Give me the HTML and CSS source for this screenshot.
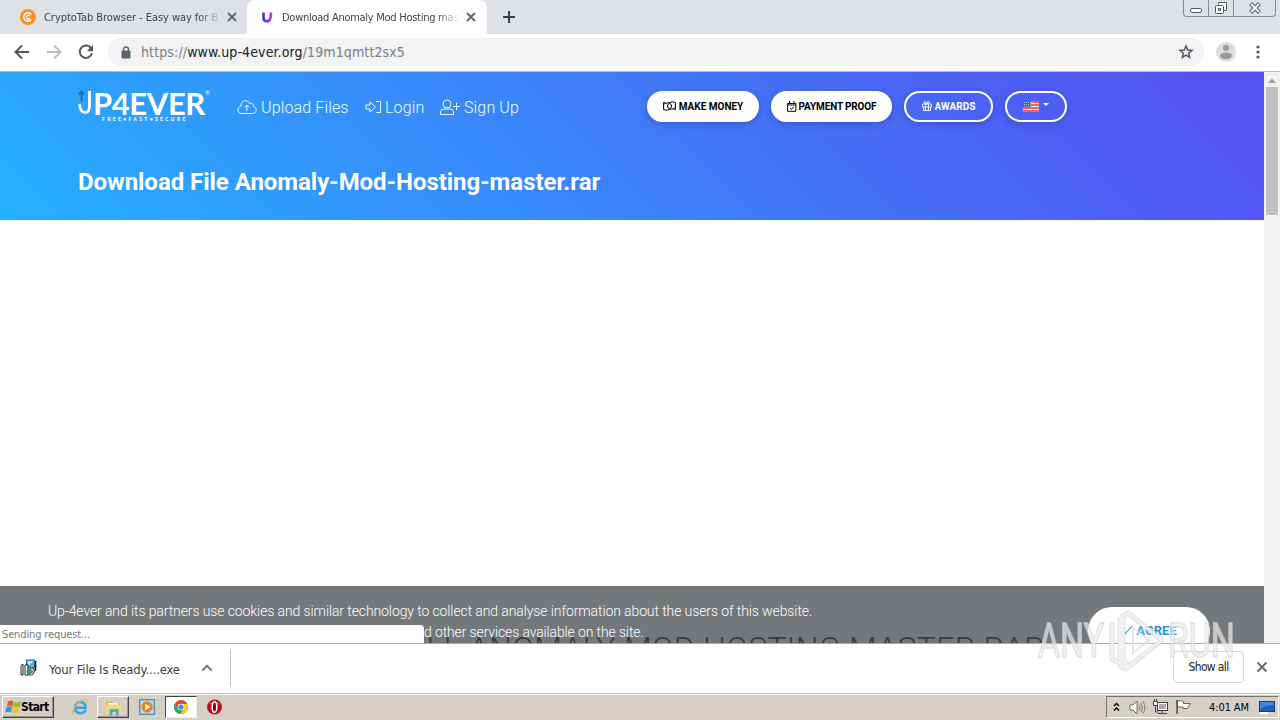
FILE: index.html
```html
<!DOCTYPE html>
<html lang="en">
<head>
<meta charset="utf-8">
<title>Download Anomaly Mod Hosting master rar</title>
<link rel="stylesheet" href="styles.css">
</head>
<body>
<div class="screen">
  <div class="tabstrip">
    <div class="tab">
      <svg class="favicon" width="16" height="16" viewBox="0 0 16 16"><circle cx="8" cy="8" r="8" fill="#f7931e"/><path d="M11.3 5.2A4.3 4.3 0 1 0 11.3 10.8M10 6.8A2 2 0 1 0 10 9.2" fill="none" stroke="#fff" stroke-width="1.4"/></svg>
      <span class="tab-title">CryptoTab Browser - Easy way for B</span>
      <svg class="close" width="10" height="10" viewBox="0 0 10 10"><path d="M1 1l8 8M9 1L1 9" stroke="#5f6368" stroke-width="1.8"/></svg>
    </div>
    <div class="tab active">
      <svg class="favicon" width="16" height="16" viewBox="0 0 16 16"><defs><linearGradient id="u" x2="1"><stop stop-color="#5038c8"/><stop offset="1" stop-color="#b63ae0"/></linearGradient></defs><path d="M4.500 3.500V8.500Q4.500 12.300 7.700 12.300T11.500 8.500L12 3.500" fill="none" stroke="url(#u)" stroke-width="2.700"/></svg>
      <span class="tab-title second">Download Anomaly Mod Hosting mas</span>
      <svg class="close" width="10" height="10" viewBox="0 0 10 10"><path d="M1 1l8 8M9 1L1 9" stroke="#5f6368" stroke-width="1.8"/></svg>
    </div>
    <svg class="newtab" width="12" height="12" viewBox="0 0 12 12"><path d="M6 0v12M0 6h12" stroke="#3c4043" stroke-width="2"/></svg>
    <div class="winbtns">
      <span class="wb1"><svg width="12" height="6"><rect x=".5" y=".5" width="11" height="4" rx="1.5" fill="#fff" stroke="#555b66"/></svg></span>
      <span class="wb2"><svg width="14" height="14"><path d="M4.500 3.500v-2h8v8h-3" fill="#fff" stroke="#555b66"/><rect x="1.500" y="4.500" width="8" height="8" rx="1" fill="#fff" stroke="#555b66"/><rect x="4.500" y="7.500" width="2" height="2" fill="none" stroke="#555b66"/></svg></span>
      <span class="wb3"><svg width="14" height="12" viewBox="0 0 14 12"><path d="M2.500 1.500L11.500 10.500M11.500 1.500L2.500 10.500" stroke="#555b66" stroke-width="4"/><path d="M3 2L11 10M11 2L3 10" stroke="#fff" stroke-width="2"/></svg></span>
    </div>
  </div>

  <div class="toolbar">
    <svg class="nav" width="16" height="16" viewBox="0 0 16 16"><path d="M15 8H2M8 1.500L1.500 8L8 14.500" fill="none" stroke="#54585d" stroke-width="1.900"/></svg>
    <svg class="nav" width="16" height="16" viewBox="0 0 16 16"><path d="M1 8H14M8 1.500L14.500 8L8 14.500" fill="none" stroke="#babcbe" stroke-width="1.900"/></svg>
    <svg class="nav" width="16" height="16" viewBox="0 0 16 16"><path d="M13.300 4.500A6.200 6.200 0 1 0 14 9.300" fill="none" stroke="#54585d" stroke-width="2"/><path d="M15 1v6.200H8.800z" fill="#54585d"/></svg>
    <div class="omnibox">
      <svg class="lock" width="10" height="13" viewBox="0 0 10 13"><path d="M2.500 6V3.500a2.500 2.500 0 0 1 5 0V6" fill="none" stroke="#5f6368" stroke-width="1.400"/><rect x=".5" y="4.500" width="9" height="8" rx="1" fill="#5f6368"/></svg>
      <span class="url"><i>https://</i>www.up-4ever.org<i>/19m1qmtt2sx5</i></span>
      <svg class="star" width="16" height="16" viewBox="0 0 16 16"><path d="M8 2l1.700 4 4.300.4-3.300 2.800 1 4.200L8 11.200l-3.700 2.200 1-4.200L2 6.400l4.300-.4z" fill="none" stroke="#54585d" stroke-width="1.500"/></svg>
    </div>
    <svg class="avatar" width="20" height="20" viewBox="0 0 20 20"><circle cx="10" cy="10" r="10" fill="#dcdcdc"/><circle cx="10" cy="5.800" r="3.100" fill="#9b9b9b"/><ellipse cx="10" cy="13.800" rx="6" ry="3.300" fill="#9b9b9b"/></svg>
    <svg class="dots" width="4" height="14" viewBox="0 0 4 14"><g fill="#54585d"><circle cx="2" cy="2" r="1.600"/><circle cx="2" cy="7" r="1.600"/><circle cx="2" cy="12" r="1.600"/></g></svg>
  </div>

  <div class="viewport">
    <main class="page">
      <header class="hero">
        <nav class="sitenav">
          <div class="logo">
            <div class="logo-word"><svg width="13" height="26" viewBox="0 0 13 26"><path d="M3.500 12V3M1 5.500L3.500 2 6 5.500" fill="none" stroke="#2462b0" stroke-width="1.500"/><path d="M1.500 15Q2 23.500 7 23.500Q11.500 23.500 11.500 17V2" fill="none" stroke="#fff" stroke-width="2.800"/></svg><b>P4EVER</b><sup>®</sup></div>
            <div class="logo-tag">FREE•FAST•SECURE</div>
          </div>
          <div class="links">
            <a class="l1"><svg width="20" height="16" viewBox="0 0 20 16"><path d="M5 14.500H15.500C20 14.500 20.500 8.500 16.500 7.500C17 4.500 14 3.500 12.800 4.800C10.500-.5 3.500 1.500 4 7C-.3 8-.3 14.500 5 14.500M9.800 12V6M7.300 8.500L9.800 6L12.300 8.500" fill="none" stroke="#eaffff"/></svg>Upload Files</a>
            <a class="l2"><svg width="16" height="14" viewBox="0 0 16 14"><path d="M1 5H5V2L10.500 7L5 12V9H1zM11 1.500h4.500v11H11" fill="none" stroke="#eaffff"/></svg>Login</a>
            <a class="l3"><svg width="20" height="17" viewBox="0 0 20 17"><circle cx="7" cy="5" r="4" fill="none" stroke="#eaffff"/><path d="M.5 15.500V13Q.5 10 4 10H10Q13.500 10 13.500 13V15.500zM13 7.500h7M16.500 4v7" fill="none" stroke="#eaffff"/></svg>Sign Up</a>
          </div>
          <div class="buttons">
            <a class="btn b1"><svg width="13" height="10" viewBox="0 0 13 10"><path d="M.6 1.500Q3.500 3 6.500 1.500T12.400 1.500V8.500Q9.500 7 6.500 8.500T.6 8.500z" fill="none" stroke="#000"/><ellipse cx="6.500" cy="5" rx="2" ry="2.500" fill="none" stroke="#000"/><path d="M1 3.500l1.500-1.500M10.500 8l1.500-1.500" stroke="#000"/></svg>MAKE MONEY</a>
            <a class="btn b2"><svg width="10" height="11" viewBox="0 0 10 11"><path d="M.6 2.500h8.300v7.800H.6zM.6 4h8.300M2.500 0v3M7 0v3M3 7l1.300 1.400L7 5.800" fill="none" stroke="#000"/></svg>PAYMENT PROOF</a>
            <a class="btn ghost b3"><svg width="10" height="10" viewBox="0 0 10 10"><path d="M.5 3h9v3h-9zM1.500 6v3.500h7V6M3.500 3v6.500M6.500 3v6.500M5 3Q2 3 2.300 1.200T5 3Q5-.2 7 .7T5 3" fill="none" stroke="#fff" stroke-width=".9"/></svg>AWARDS</a>
            <a class="btn ghost b4"><svg width="16" height="11" viewBox="0 0 16 11"><rect width="16" height="11" fill="#f7e6eb"/><path d="M0 1h16M0 4h16M0 7h16M0 10h16" stroke="#e83b48" stroke-width="1.300"/><rect width="8" height="6.300" fill="#3267b5"/><path d="M1 1.500h7M1 3.500h7M1 5.300h7" stroke="#d7e9ff" stroke-width=".7" stroke-dasharray="1 1"/></svg><em class="caret"></em></a>
          </div>
        </nav>
        <h1>Download File Anomaly-Mod-Hosting-master.rar</h1>
      </header>
      <h2 class="file-title">DOWNLOAD FULL ANOMALY MOD HOSTING MASTER RAR</h2>
      <div class="cookies">
        <p>Up-4ever and its partners use cookies and similar technology to collect and analyse information about the users of this website.<br><span class="line2">d other services available on the site.</span></p>
      </div>
      <a class="agree"><svg width="12" height="10" viewBox="0 0 12 10"><path d="M.7 5.500L4 8.800L11.300 .8" fill="none" stroke="#2d91d3" stroke-width="1.200"/></svg>AGREE</a>
      <div class="status">Sending request...</div>
    </main>
    <div class="scrollbar"><svg width="16" height="15"><path d="M4 11L8 6.500L12 11z" fill="#a0a0a0"/></svg><div class="thumb"></div></div>
  </div>

  <div class="downloads">
    <svg class="installer" width="17" height="18" viewBox="0 0 17 18"><path d="M15.500 2v9l-3 3" fill="none" stroke="#111" stroke-width="1.600"/><rect x="6.500" y="1" width="8" height="8" fill="#5fa8e8" stroke="#286496"/><path d="M7.500 2h6l-5 4.500z" fill="#c9e8ff"/><path d="M1 6.500l2-1.500v11H1zM5 6h3v10H5z" fill="#fff" stroke="#222"/><path d="M8 9h5l1.500 3-2 4H8z" fill="#e8eee9" stroke="#38434c"/><path d="M7 11.500h2.500V9.500L13 12.500 9.500 15.500v-1.700H7z" fill="#42aa65" stroke="#176a36" stroke-width=".7"/></svg>
    <span class="dl-name">Your File Is Ready....exe</span>
    <svg class="chev" width="12" height="8" viewBox="0 0 12 8"><path d="M1.200 6.500L6 1.800L10.800 6.500" fill="none" stroke="#6c7073" stroke-width="1.800"/></svg>
    <i class="divider"></i>
    <a class="showall">Show all</a>
    <svg class="dl-close" width="12" height="12" viewBox="0 0 12 12"><path d="M1.500 1.500l9 9M10.500 1.500l-9 9" stroke="#666a6d" stroke-width="1.900"/></svg>
  </div>

  <div class="taskbar">
    <div class="start"><svg width="17" height="16" viewBox="0 0 17 16"><path d="M3 2.500Q6 .5 8.500 2.500L7.500 7.500Q5 6 1.800 7.500z" fill="#e85c22"/><path d="M9.200 3Q12.500 4.500 16 2.500L14.800 7.500Q12 9 8.200 7.800z" fill="#8cbd38"/><path d="M1.500 8.200Q4.500 6.700 7.300 8.200L6 13.500Q3.500 12 .3 13.500z" fill="#3d8ed8"/><path d="M8 8.500Q11 10 14.500 8.200L13.200 13.500Q10.500 15.500 6.800 13.800z" fill="#f5c02d"/></svg><b>Start</b></div>
    <svg class="ie" width="18" height="18" viewBox="0 0 18 18"><path d="M14.800 12Q12 16 8 15Q3.500 14 4 9Q5 4 9.500 4Q14.800 4.500 14.500 9.700H5" fill="none" stroke="#35a5e5" stroke-width="2.500"/><path d="M2.500 16Q.2 15 3.500 9.500Q10 0 15.500 1.500Q17 2.500 15 6" fill="none" stroke="#e4ba3d" stroke-width="1.200"/></svg>
    <div class="task folder"><svg width="17" height="17" viewBox="0 0 17 17"><path d="M1 2h6l1 2h7v11H1z" fill="#e0bd58"/><path d="M3 4h10v9H3z" fill="#fff7c6"/><path d="M1 6h15v9H1z" fill="#f2d978"/><path d="M4.500 16V10h9v6.500h-3v-3.500H7.500V16.500h-3z" fill="#4aa9dd"/></svg></div>
    <svg class="wmp" width="16" height="16" viewBox="0 0 16 16"><rect x=".5" y=".5" width="15" height="15" fill="#8abce8" stroke="#5889b7"/><rect x="2" y="2" width="12" height="12" fill="#c2def4"/><circle cx="8" cy="8" r="5.700" fill="#ed8518"/><path d="M6.300 4.800v6.400L11.500 8z" fill="#fff"/></svg>
    <div class="task chrome"><svg width="14" height="14" viewBox="0 0 14 14"><circle cx="7" cy="7" r="7" fill="#e44236"/><path d="M.9 3.600A7 7 0 0 0 6.500 14L9.800 8.500L7 7L4.200 8.500z" fill="#3aa657"/><path d="M13.300 4A7 7 0 0 1 6.500 14L9.800 8.500L8.500 4z" fill="#fbc72d"/><circle cx="7" cy="7" r="3.300" fill="#fff"/><circle cx="7" cy="7" r="2.600" fill="#4284ed"/></svg></div>
    <svg class="opera" width="15" height="16" viewBox="0 0 15 16"><circle cx="7.500" cy="8" r="7.500" fill="#b9141b"/><path d="M2 5Q7 0 13 5" fill="#e35c60"/><ellipse cx="7.500" cy="8" rx="2.300" ry="5.300" fill="#741014" stroke="#fff" stroke-width="1.500"/></svg>
    <div class="tray">
      <svg class="t1" width="7" height="10" viewBox="0 0 7 10"><path d="M1 4L3.500 1.500L6 4M1 8.500L3.500 6L6 8.500" fill="none" stroke="#000" stroke-width="1.400"/></svg>
      <svg class="t2" width="17" height="15" viewBox="0 0 17 15"><path d="M1 5h3l4-4v13l-4-4H1z" fill="#fff" stroke="#666"/><path d="M10 4.500q2 3 0 6M12 3q3 4.500 0 9M14 1.500q4 6 0 12" fill="none" stroke="#777"/></svg>
      <svg class="t3" width="17" height="16" viewBox="0 0 17 16"><rect x="5.500" y="3.500" width="10" height="8" fill="#aaa" stroke="#444"/><path d="M6.500 4.500h8v6h-8z" fill="none" stroke="#fff"/><path d="M6 14.500h9M10 12v2M1.500 2.500h4v4h-4zM2.500 0v2M4.500 0v2M3.500 7v6h3" fill="none" stroke="#444"/><path d="M2 3h3v3H2z" fill="#fff"/></svg>
      <svg class="t4" width="17" height="16" viewBox="0 0 17 16"><path d="M2.500 2Q6 1 8.500 2.500V4.500H15.500L12.500 9.500H8V8H2.500z" fill="#fff" stroke="#666"/><path d="M2 1v14" stroke="#555" stroke-width="1.600"/></svg>
      <span class="clock">4:01 AM</span>
      <svg class="t5" width="16" height="13" viewBox="0 0 16 13"><rect x=".5" y=".5" width="15" height="10" fill="#1763bd" stroke="#17416c"/><path d="M1 1h14v3Q7 4 1 8z" fill="#438ad4"/><path d="M1 12h8" stroke="#fff" stroke-width="2"/></svg>
    </div>
  </div>

  <div class="watermark"><span>ANY</span><svg width="62" height="66" viewBox="0 0 62 66"><path d="M7 14V51L12 54M15 9V58L21 61V52M23 5L57 32L22 60L18 54V8z" fill="rgba(255,255,255,.16)" stroke="rgba(205,205,205,.6)" stroke-width="5" stroke-linejoin="round"/><path d="M7 14V51L12 54M15 9V58L21 61V52M23 5L57 32L22 60L18 54V8z" fill="none" stroke="rgba(245,245,245,.8)" stroke-width="3"/><path d="M28 20V45L44 32z" fill="rgba(255,255,255,.2)" stroke="rgba(222,222,222,.8)" stroke-width="2"/></svg><span>RUN</span></div>
</div>
</body>
</html>
```
FILE: styles.css
```css
* { box-sizing: border-box; }
body { margin: 0; overflow: hidden; font-family: "DejaVu Sans Condensed", "DejaVu Sans", Tahoma, sans-serif; font-stretch: condensed; }
svg { display: block; flex: none; }
i, em { font-style: normal; }
.screen { position: relative; width: 1280px; height: 720px; display: flex; flex-direction: column; background: #fff; }

.tabstrip { height: 34px; background: #dee1e6; display: flex; align-items: flex-start; }
.tab { width: 247px; height: 34px; display: flex; align-items: center; padding-left: 20px; color: #3f4246; }
.tab.active { width: 240px; padding-left: 12px; background: #fff; border-radius: 8px 8px 0 0; }
.tab-title { width: 175px; margin-left: 8px; font-size: 11px; letter-spacing: -.05px; white-space: nowrap; overflow: hidden; -webkit-mask-image: linear-gradient(90deg, #000 155px, transparent 178px); }
.tab-title.second { width: 176px; margin-left: 7px; letter-spacing: -.27px; }
.close { margin-left: 8px; }
.newtab { margin: 11px 0 0 16px; }
.winbtns { margin-left: auto; margin-right: 4px; width: 93px; height: 17px; display: flex; border: 1px solid #858b98; border-top: 0; border-radius: 0 0 4px 4px; }
.winbtns span { display: flex; justify-content: center; align-items: center; }
.wb1 { width: 25px; padding-top: 5px; border-right: 1px solid #858b98; }
.wb2 { width: 25px; border-right: 1px solid #858b98; }
.wb3 { width: 41px; }

.toolbar { height: 38px; display: flex; align-items: center; padding: 0 0 1px 14px; border-bottom: 1px solid #a5bdd5; }
.nav { margin-right: 16px; }
.omnibox { width: 1096px; height: 28px; margin-left: -2px; border-radius: 14px; background: #f1f3f4; display: flex; align-items: center; padding: 0 10px 0 13px; }
.url { margin-left: 10px; font-size: 14px; color: #202124; letter-spacing: .12px; }
.url i { color: #7b7f83; }
.star { margin-left: auto; }
.avatar { margin-left: 12px; }
.dots { margin-left: 20px; }

.viewport { height: 571px; display: flex; }
.page { position: relative; width: 1264px; overflow: hidden; font-family: Roboto, sans-serif; font-stretch: normal; }
.hero { height: 148px; background: linear-gradient(45deg, #25b0ff 0%, #5451f2 95%, #5451f2 100%); color: #fff; }
.sitenav { height: 70px; display: flex; align-items: center; padding-left: 78px; }
.logo { width: 159px; height: 36px; }
.logo-word { display: flex; height: 27px; }
.logo-word b { margin-left: 2px; font: 700 31px/28px Lato, sans-serif; letter-spacing: -.4px; }
.logo-word sup { font-size: 6px; line-height: 8px; }
.logo-tag { margin: 0 0 0 24px; font: 900 5px/6px Lato, sans-serif; letter-spacing: 2.35px; white-space: nowrap; }
.links { display: flex; width: 410px; font-size: 16px; font-weight: 300; color: #f0ffff; letter-spacing: .14px; white-space: nowrap; }
.links a { display: flex; align-items: center; gap: 4px; }
.l1 { width: 128px; }
.l2 { width: 75px; }
.buttons { display: flex; gap: 12px; margin-top: -2px; }
.btn { height: 31px; display: flex; align-items: center; justify-content: center; gap: 3px; border-radius: 16px; background: #fff; color: #000; font-size: 10px; font-weight: 700; white-space: nowrap; box-shadow: 0 2px 7px rgba(20,20,90,.28); }
.ghost { background: transparent; border: 2px solid #fff; color: #fff; }
.b1 { width: 112px; }
.b2 { width: 121px; letter-spacing: -.15px; gap: 2px; }
.b3 { width: 89px; }
.b4 { width: 62px; }
.caret { border: 3px solid transparent; border-top-color: #fff; border-bottom: 0; margin: -3px 0 0 1px; }
h1 { margin: 24px 0 0 78px; font-size: 24px; line-height: 32px; font-weight: 700; letter-spacing: -.04px; white-space: nowrap; }
.file-title { position: absolute; left: 220px; top: 557px; width: 825px; display: flex; justify-content: flex-end; margin: 0; font-size: 32px; line-height: 38px; font-weight: 300; letter-spacing: .3px; color: #000; white-space: nowrap; }
.cookies { position: absolute; left: 0; top: 514px; width: 1264px; height: 57px; background: rgba(73,77,81,.76); color: #fff; }
.cookies p { margin: 15px 0 0 48px; font-size: 14px; line-height: 21px; font-weight: 300; letter-spacing: -.105px; white-space: nowrap; }
.line2 { margin-left: 376px; letter-spacing: -.13px; }
.agree { position: absolute; left: 1088px; top: 535px; width: 122px; height: 48px; padding-bottom: 2px; border-radius: 24px; background: #fff; display: flex; align-items: center; justify-content: center; gap: 3px; color: #2d91d3; font-size: 13px; font-weight: 700; }
.status { position: absolute; left: 0; top: 553px; width: 424px; height: 18px; padding-left: 2px; background: #fff; border-top-right-radius: 4px; color: #777; font: condensed 11px/19px "DejaVu Sans Condensed", "DejaVu Sans", sans-serif; letter-spacing: -.13px; }
.scrollbar { width: 16px; background: #f1f1f1; }
.thumb { width: 12px; height: 128px; margin: 0 0 0 2px; background: #c1c1c1; }

.downloads { height: 50px; border-top: 1px solid #a9a9a9; display: flex; align-items: center; padding: 0 12px 2px 20px; color: #3c3f42; }
.dl-name { width: 140px; margin-left: 12px; padding-top: 3px; font-size: 13px; letter-spacing: -.16px; white-space: nowrap; }
.chev { margin-left: 12px; }
.divider { width: 1px; height: 38px; background: #c8c8c8; margin-left: 17px; }
.showall { width: 71px; height: 32px; margin: -1px 0 0 auto; border: 1px solid #d5d7da; border-radius: 4px; text-align: center; font-size: 12px; line-height: 30px; letter-spacing: -.65px; color: #222; }
.dl-close { margin: -1px 0 0 12px; }

.taskbar { height: 27px; background: #d6cfc6; border-top: 1px solid #c4beb5; box-shadow: inset 0 1px #f7f5f1; display: flex; align-items: center; padding-left: 2px; }
.start { width: 52px; height: 22px; display: flex; align-items: center; padding-left: 2px; font-size: 12px; letter-spacing: -.65px; border: 1px solid; border-color: #fff #444 #444 #fff; box-shadow: inset -1px -1px #99958e; }
.start b { margin-left: -1px; }
.ie { margin-left: 17px; }
.task { width: 32px; height: 22px; display: flex; justify-content: center; align-items: center; border: 1px solid; }
.folder { margin-left: 8px; border-color: #fff #444 #444 #fff; box-shadow: inset -1px -1px #99958e; }
.wmp { margin-left: 10px; }
.chrome { margin-left: 10px; background: #fff; border-color: #444 #eee #eee #444; }
.opera { margin-left: 10px; }
.tray { width: 173px; height: 22px; margin-left: auto; margin-right: 1px; display: flex; align-items: center; padding-left: 6px; border: 1px solid; border-color: #77736d #fff #fff #77736d; }
.t2 { margin-left: 9px; }
.t3 { margin-left: 6px; }
.t4 { margin-left: 6px; }
.clock { width: 42px; margin-left: 17px; font-size: 11px; letter-spacing: -.1px; white-space: nowrap; }
.t5 { margin-left: 8px; }

.watermark { position: absolute; left: 1038px; top: 608px; height: 66px; display: flex; align-items: center; color: rgba(240,240,240,.65); font: 400 49px/66px Roboto, sans-serif; -webkit-text-stroke: 2px rgba(215,215,215,.6); white-space: nowrap; }
.watermark span { width: 66px; transform: scaleX(.69); transform-origin: left center; }
.watermark svg { margin-left: 1px; }
.watermark svg + span { margin-left: 1px; }
```
